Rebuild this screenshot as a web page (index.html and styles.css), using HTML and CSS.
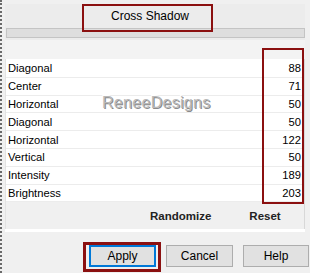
FILE: index.html
```html
<!DOCTYPE html>
<html>
<head>
<meta charset="utf-8">
<link rel="stylesheet" href="styles.css">
</head>
<body>
<div class="win">
  <div class="top">
    <div class="title">Cross Shadow</div>
    <div class="bar"></div>
  </div>
  <div class="gap"></div>
  <div class="panel">
    <div class="rows">
      <div class="row"><span>Diagonal</span><span>88</span></div>
      <div class="row"><span>Center</span><span>71</span></div>
      <div class="row"><span>Horizontal</span><span>50</span></div>
      <div class="row"><span>Diagonal</span><span>50</span></div>
      <div class="row"><span>Horizontal</span><span>122</span></div>
      <div class="row"><span>Vertical</span><span>50</span></div>
      <div class="row"><span>Intensity</span><span>189</span></div>
      <div class="row"><span>Brightness</span><span>203</span></div>
      <div class="mark">ReneeDesigns</div>
    </div>
    <div class="actions">
      <span class="rand">Randomize</span>
      <span class="reset">Reset</span>
    </div>
  </div>
  <div class="sep"></div>
  <div class="buttons">
    <div class="btn apply">Apply</div>
    <div class="btn">Cancel</div>
    <div class="btn help">Help</div>
  </div>
  <div class="hl hl-title"></div>
  <div class="hl hl-values"></div>
  <div class="hl hl-apply"></div>
</div>
</body>
</html>
```
FILE: styles.css
```css
* { box-sizing: border-box; }
html, body { margin: 0; padding: 0; }
body {
  font-family: "Liberation Sans", Arial, sans-serif;
  font-size: 11px;
  color: #000;
  background: #f0f0f0;
}
.win {
  position: relative;
  width: 310px;
  height: 273px;
  border-left: 2px dotted #6a6a6a;
  background: #f0f0f0;
  overflow: hidden;
}
.top {
  margin: 4px 5px 0 3px;
  height: 36px;
  background: #ececec;
}
.title {
  height: 24px;
  margin-left: 80px;
  width: 130px;
  display: flex;
  align-items: center;
  justify-content: center;
  font-size: 12px;
}
.bar {
  margin: 0 0 0 1px;
  height: 10px;
  background: #dedede;
  border: 1px solid #c4c4c4;
}
.gap { height: 19px; background: #f3f3f3; margin: 0 5px 0 3px; }
.panel {
  margin: 0 5px 0 3px;
  border-left: 1px solid #e2e2e2;
  border-right: 1px solid #d8d8d8;
}
.rows {
  position: relative;
  background: #fff;
  padding-top: 1px;
}
.row {
  height: 17.8px;
  display: flex;
  align-items: center;
  justify-content: space-between;
  padding: 0 3px 0 2px;
  border-bottom: 1px solid #ececec;
  font-size: 11.2px;
}
.mark {
  position: absolute;
  left: 96px;
  top: 35px;
  font-size: 16px;
  color: #b9b9b9;
  letter-spacing: 0.3px;
  text-shadow: 1px 1px 0 #8a8a8a, -1px -1px 0 #fff;
}
.actions {
  height: 27px;
  background: #f0f0f0;
  display: flex;
  align-items: center;
  font-weight: bold;
  font-size: 11.5px;
  color: #222;
}
.rand { margin-left: 144px; }
.reset { margin-left: 38px; }
.sep { height: 3px; background: #fff; margin: 0 5px 0 3px; }
.buttons {
  display: flex;
  padding: 13px 0 0 87px;
}
.btn {
  flex-shrink: 0;
  width: 67px;
  height: 22px;
  border: 1px solid #adadad;
  background: #e1e1e1;
  display: flex;
  align-items: center;
  justify-content: center;
  font-size: 12px;
  margin-right: 10px;
}
.apply { border: 2px solid #0078d7; }
.help { width: 66px; margin-right: 0; }
.hl {
  position: absolute;
  border: 2px solid #8b1010;
}
.hl-title { left: 80px; top: 4px; width: 131px; height: 28px; }
.hl-values { left: 260px; top: 48px; width: 42px; height: 156px; }
.hl-apply { left: 81px; top: 242px; width: 78px; height: 30px; border-width: 3px; }
```
